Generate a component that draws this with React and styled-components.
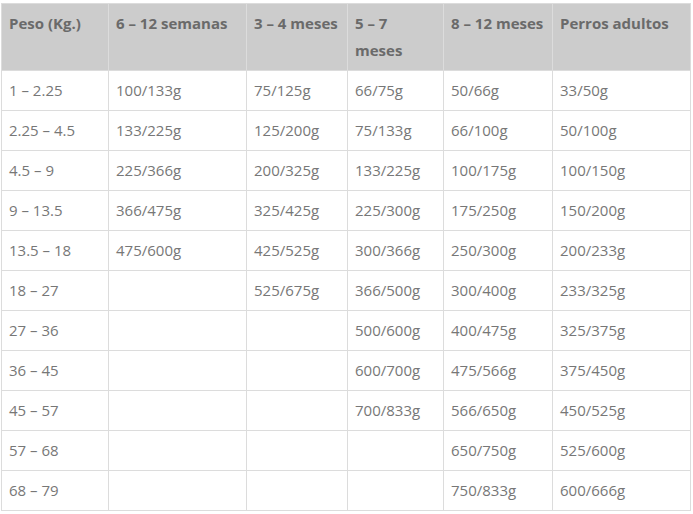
import React from 'react';
import styled, { createGlobalStyle } from 'styled-components';

const GlobalStyle = createGlobalStyle`
  body {
    margin: 0;
    background: #fff;
    font-family: "Open Sans", "Liberation Sans", sans-serif;
  }
`;

const columnas = [
  { titulo: 'Peso (Kg.)', ancho: 107 },
  { titulo: '6 – 12 semanas', ancho: 138 },
  { titulo: '3 – 4 meses', ancho: 101 },
  { titulo: '5 – 7 meses', ancho: 96 },
  { titulo: '8 – 12 meses', ancho: 109 },
  { titulo: 'Perros adultos', ancho: 138 },
];

const filas = [
  ['1 – 2.25', '100/133g', '75/125g', '66/75g', '50/66g', '33/50g'],
  ['2.25 – 4.5', '133/225g', '125/200g', '75/133g', '66/100g', '50/100g'],
  ['4.5 – 9', '225/366g', '200/325g', '133/225g', '100/175g', '100/150g'],
  ['9 – 13.5', '366/475g', '325/425g', '225/300g', '175/250g', '150/200g'],
  ['13.5 – 18', '475/600g', '425/525g', '300/366g', '250/300g', '200/233g'],
  ['18 – 27', '', '525/675g', '366/500g', '300/400g', '233/325g'],
  ['27 – 36', '', '', '500/600g', '400/475g', '325/375g'],
  ['36 – 45', '', '', '600/700g', '475/566g', '375/450g'],
  ['45 – 57', '', '', '700/833g', '566/650g', '450/525g'],
  ['57 – 68', '', '', '', '650/750g', '525/600g'],
  ['68 – 79', '', '', '', '750/833g', '600/666g'],
];

const App = () => (
  <>
    <GlobalStyle />
    <Wrapper>
      <Table>
        <colgroup>
          {columnas.map((c) => (
            <col key={c.titulo} style={{ width: c.ancho }} />
          ))}
        </colgroup>
        <thead>
          <tr>
            {columnas.map((c) => (
              <Th key={c.titulo}>{c.titulo}</Th>
            ))}
          </tr>
        </thead>
        <tbody>
          {filas.map((fila, i) => (
            <tr key={i}>
              {fila.map((valor, j) => (
                <Td key={j}>{valor}</Td>
              ))}
            </tr>
          ))}
        </tbody>
      </Table>
    </Wrapper>
  </>
);

export default App;

// Styled Components
const Wrapper = styled.div`
  padding: 3px 0 0 1px;
`;

const Table = styled.table`
  width: 689px;
  table-layout: fixed;
  border-collapse: collapse;
  font-size: 15px;
  line-height: 27px;
`;

const Th = styled.th`
  background-color: #cccccc;
  color: #6a6a6a;
  font-weight: 700;
  text-align: left;
  vertical-align: top;
  padding: 6px 7px;
  border: 1px solid #dcdcdc;
`;

const Td = styled.td`
  color: #777;
  text-align: left;
  padding: 6px 7px;
  height: 27px;
  border: 1px solid #dcdcdc;
`;
